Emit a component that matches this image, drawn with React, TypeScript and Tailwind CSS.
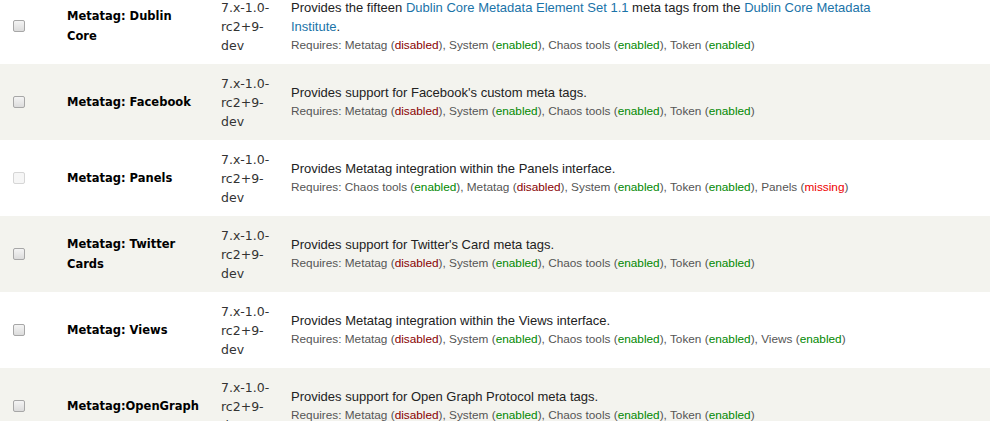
import React from 'react';

type Dep = { name: string; status: 'enabled' | 'disabled' | 'missing' };

interface ModuleRow {
  name: string;
  version: string;
  description: React.ReactNode;
  requires: Dep[];
  disabled?: boolean;
}

const std: Dep[] = [
  { name: 'Metatag', status: 'disabled' },
  { name: 'System', status: 'enabled' },
  { name: 'Chaos tools', status: 'enabled' },
  { name: 'Token', status: 'enabled' },
];

const rows: ModuleRow[] = [
  {
    name: 'Metatag: Dublin Core',
    version: '7.x-1.0-rc2+9-dev',
    description: (
      <>
        Provides the fifteen{' '}
        <a href="#" className="text-[#1a73a8]">Dublin Core Metadata Element Set 1.1</a> meta tags from the{' '}
        <a href="#" className="text-[#1a73a8]">Dublin Core Metadata Institute</a>.
      </>
    ),
    requires: std,
  },
  {
    name: 'Metatag: Facebook',
    version: '7.x-1.0-rc2+9-dev',
    description: "Provides support for Facebook's custom meta tags.",
    requires: std,
  },
  {
    name: 'Metatag: Panels',
    version: '7.x-1.0-rc2+9-dev',
    description: 'Provides Metatag integration within the Panels interface.',
    requires: [
      { name: 'Chaos tools', status: 'enabled' },
      { name: 'Metatag', status: 'disabled' },
      { name: 'System', status: 'enabled' },
      { name: 'Token', status: 'enabled' },
      { name: 'Panels', status: 'missing' },
    ],
    disabled: true,
  },
  {
    name: 'Metatag: Twitter Cards',
    version: '7.x-1.0-rc2+9-dev',
    description: "Provides support for Twitter's Card meta tags.",
    requires: std,
  },
  {
    name: 'Metatag: Views',
    version: '7.x-1.0-rc2+9-dev',
    description: 'Provides Metatag integration within the Views interface.',
    requires: [...std, { name: 'Views', status: 'enabled' }],
  },
  {
    name: 'Metatag:OpenGraph',
    version: '7.x-1.0-rc2+9-dev',
    description: 'Provides support for Open Graph Protocol meta tags.',
    requires: std,
  },
];

const statusColor = {
  enabled: 'text-[#080]',
  disabled: 'text-[#800]',
  missing: 'text-[#e00]',
};

function Requires({ deps }: { deps: Dep[] }) {
  return (
    <div className="text-[11.8px] text-[#555] leading-[19px]">
      Requires:{' '}
      {deps.map((d, i) => (
        <span key={d.name}>
          {d.name} (<span className={statusColor[d.status]}>{d.status}</span>)
          {i < deps.length - 1 ? ', ' : ''}
        </span>
      ))}
    </div>
  );
}

export default function App() {
  return (
    <div className="w-[990px] h-[421px] overflow-hidden bg-white font-['Liberation_Sans',Arial,sans-serif] text-[#333]">
      <table className="-mt-[12px] w-[1100px] border-collapse">
        <tbody>
          {rows.map((row, i) => (
            <tr key={row.name} className={`h-[76px] ${i % 2 === 1 ? 'bg-[#f3f3ee]' : 'bg-white'}`}>
              <td className="w-[57px] pl-[13px] align-middle">
                <input
                  type="checkbox"
                  disabled={row.disabled}
                  className={`block appearance-none w-[12px] h-[12px] rounded-[2px] border ${
                    row.disabled
                      ? 'border-[#d6d6d6] bg-[#f6f6f6]'
                      : 'border-[#a7a7a7] bg-gradient-to-b from-[#f4f4f4] to-[#dcdcdc]'
                  }`}
                />
              </td>
              <td className="w-[154px] px-[10px] align-middle font-['DejaVu_Sans',Verdana,sans-serif] font-bold text-[11.5px] leading-[20px] text-black">
                {row.name}
              </td>
              <td className="w-[70px] px-[10px] align-middle font-['DejaVu_Sans',Verdana,sans-serif] text-[12.5px] leading-[19px] text-[#333] break-words">
                {row.version}
              </td>
              <td className="w-[620px] px-[10px] align-middle">
                <div className="text-[13px] leading-[19px] text-[#222]">{row.description}</div>
                <Requires deps={row.requires} />
              </td>
              <td />
            </tr>
          ))}
        </tbody>
      </table>
    </div>
  );
}
